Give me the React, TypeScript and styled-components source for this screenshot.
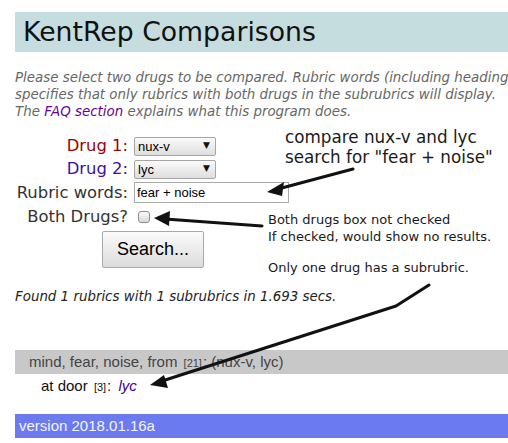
import React from "react";
import styled, { createGlobalStyle } from "styled-components";

const GlobalStyle = createGlobalStyle`
    html, body {
        margin: 0;
        padding: 0;
        background: #fff;
        overflow: hidden;
    }
    body {
        font-family: "DejaVu Sans", Verdana, sans-serif;
    }
`;

const Page = styled.div`
    position: relative;
    width: 508px;
    height: 443px;
    padding: 12px 0 0 15px;
    box-sizing: border-box;
    overflow: hidden;
`;

const Header = styled.h1`
    margin: 0;
    height: 40px;
    padding-left: 8px;
    background: #c6dddf;
    color: #111;
    font-size: 26.7px;
    font-weight: normal;
    line-height: 40px;
    white-space: nowrap;
`;

const Intro = styled.p`
    margin: 17px 0 0;
    color: #666;
    font-style: italic;
    font-size: 13.4px;
    line-height: 17px;
    white-space: nowrap;
`;

const FaqLink = styled.a`
    color: #660099;
    text-decoration: none;
`;

const Form = styled.div`
    display: grid;
    grid-template-columns: 113px auto;
    column-gap: 6px;
    row-gap: 4px;
    align-items: center;
    margin-top: 16px;
`;

const Label = styled.label<{ $color?: string }>`
    justify-self: end;
    color: ${(p) => p.$color || "#333"};
    font-size: 16.4px;
    line-height: 19px;
    white-space: nowrap;
`;

const SelectWrap = styled.div`
    position: relative;
    width: 82px;
    height: 19px;
`;

const Select = styled.select`
    appearance: none;
    width: 82px;
    height: 19px;
    padding: 0 0 0 3px;
    box-sizing: border-box;
    border: 1px solid #a6a6a6;
    border-radius: 2px;
    background: linear-gradient(#fafafa, #dedede);
    font-family: "Liberation Sans", Arial, sans-serif;
    font-size: 13px;
    color: #000;
`;

const Caret = styled.span`
    position: absolute;
    right: 6px;
    top: 3px;
    font-size: 9px;
    line-height: 12px;
    color: #111;
    pointer-events: none;
`;

const TextInput = styled.input`
    width: 155px;
    height: 21px;
    padding: 0 0 0 2px;
    box-sizing: border-box;
    border: 1px solid #a9a9a9;
    font-family: "Liberation Sans", Arial, sans-serif;
    font-size: 13px;
    color: #000;
`;

const Check = styled.input`
    appearance: none;
    width: 12px;
    height: 12px;
    margin: 4px 0 3px 4px;
    border: 1px solid #8e8e8e;
    border-radius: 3px;
    background: linear-gradient(#fcfcfc, #d8d8d8);
`;

const SearchButton = styled.button`
    margin: 5px 0 0 87px;
    width: 102px;
    height: 37px;
    border: 1px solid #a9a9a9;
    border-radius: 2px;
    background: linear-gradient(#fbfbfb, #dcdcdc);
    font-family: "Liberation Sans", Arial, sans-serif;
    font-size: 18px;
    color: #000;
`;

const Found = styled.p`
    margin: 20px 0 0;
    color: #222;
    font-style: italic;
    font-size: 13.4px;
    line-height: 17px;
    white-space: nowrap;
`;

const Results = styled.div`
    margin-top: 45px;
    font-family: "Liberation Sans", Arial, sans-serif;
`;

const RubricBar = styled.div`
    height: 24px;
    padding-left: 14px;
    background: #c8c8c8;
    color: #444;
    font-size: 15px;
    line-height: 24px;
    white-space: nowrap;
`;

const SubRow = styled.div`
    height: 24px;
    padding-left: 26px;
    color: #111;
    font-size: 15px;
    line-height: 24px;
`;

const Count = styled.span`
    margin: 0 1px 0 2px;
    font-size: 11px;
`;

const DrugName = styled.span`
    margin-left: 3px;
    color: #4400aa;
    font-style: italic;
`;

const Footer = styled.div`
    margin-top: 16px;
    height: 24px;
    padding-left: 4px;
    background: #6b7bef;
    color: #f4f4ff;
    font-family: "Liberation Sans", Arial, sans-serif;
    font-size: 15px;
    line-height: 24px;
`;

const Note = styled.div<{ $x: number; $y: number; $size: number; $lh: number }>`
    position: absolute;
    left: ${(p) => p.$x}px;
    top: ${(p) => p.$y}px;
    font-size: ${(p) => p.$size}px;
    line-height: ${(p) => p.$lh}px;
    color: #1a1a1a;
    white-space: nowrap;
`;

const Arrows = styled.svg`
    position: absolute;
    left: 0;
    top: 0;
    pointer-events: none;
`;

export default function App() {
    return (
        <>
            <GlobalStyle />
            <Page>
                <Header>KentRep Comparisons</Header>
                <Intro>
                    Please select two drugs to be compared. Rubric words (including headings) are separated by '+'. 'Both Drugs'
                    <br />
                    specifies that only rubrics with both drugs in the subrubrics will display.
                    <br />
                    The <FaqLink href="#">FAQ section</FaqLink> explains what this program does.
                </Intro>

                <Form>
                    <Label $color="#a00000">Drug 1:</Label>
                    <SelectWrap>
                        <Select defaultValue="nux-v">
                            <option>nux-v</option>
                        </Select>
                        <Caret>▼</Caret>
                    </SelectWrap>
                    <Label $color="#3a10a8">Drug 2:</Label>
                    <SelectWrap>
                        <Select defaultValue="lyc">
                            <option>lyc</option>
                        </Select>
                        <Caret>▼</Caret>
                    </SelectWrap>
                    <Label>Rubric words:</Label>
                    <TextInput defaultValue="fear + noise" />
                    <Label>Both Drugs?</Label>
                    <Check type="checkbox" />
                </Form>
                <SearchButton>Search...</SearchButton>

                <Found>Found 1 rubrics with 1 subrubrics in 1.693 secs.</Found>

                <Results>
                    <RubricBar>
                        mind, fear, noise, from <Count>[21]</Count>: (nux-v, lyc)
                    </RubricBar>
                    <SubRow>
                        at door <Count>[3]</Count>: <DrugName>lyc</DrugName>
                    </SubRow>
                </Results>

                <Footer>version 2018.01.16a</Footer>

                <Note $x={285} $y={127} $size={16.8} $lh={20}>
                    compare nux-v and lyc
                    <br />
                    search for "fear + noise"
                </Note>
                <Note $x={268} $y={211} $size={13} $lh={17}>
                    Both drugs box not checked
                    <br />
                    If checked, would show no results.
                </Note>
                <Note $x={268} $y={259} $size={13} $lh={17}>
                    Only one drug has a subrubric.
                </Note>

                <Arrows width="508" height="443" viewBox="0 0 508 443">
                    <g stroke="#111" strokeWidth="3" fill="none" strokeLinecap="round" strokeLinejoin="round">
                        <path d="M353 169 L278 189" />
                        <path d="M262 226 L165 219" />
                        <path d="M429 285 L396 306 L162 381" />
                    </g>
                    <g fill="#111">
                        <polygon points="267,192 284,182 282,196" />
                        <polygon points="154,218 170,211 169,226" />
                        <polygon points="150,385 164,375 168,388" />
                    </g>
                </Arrows>
            </Page>
        </>
    );
}
